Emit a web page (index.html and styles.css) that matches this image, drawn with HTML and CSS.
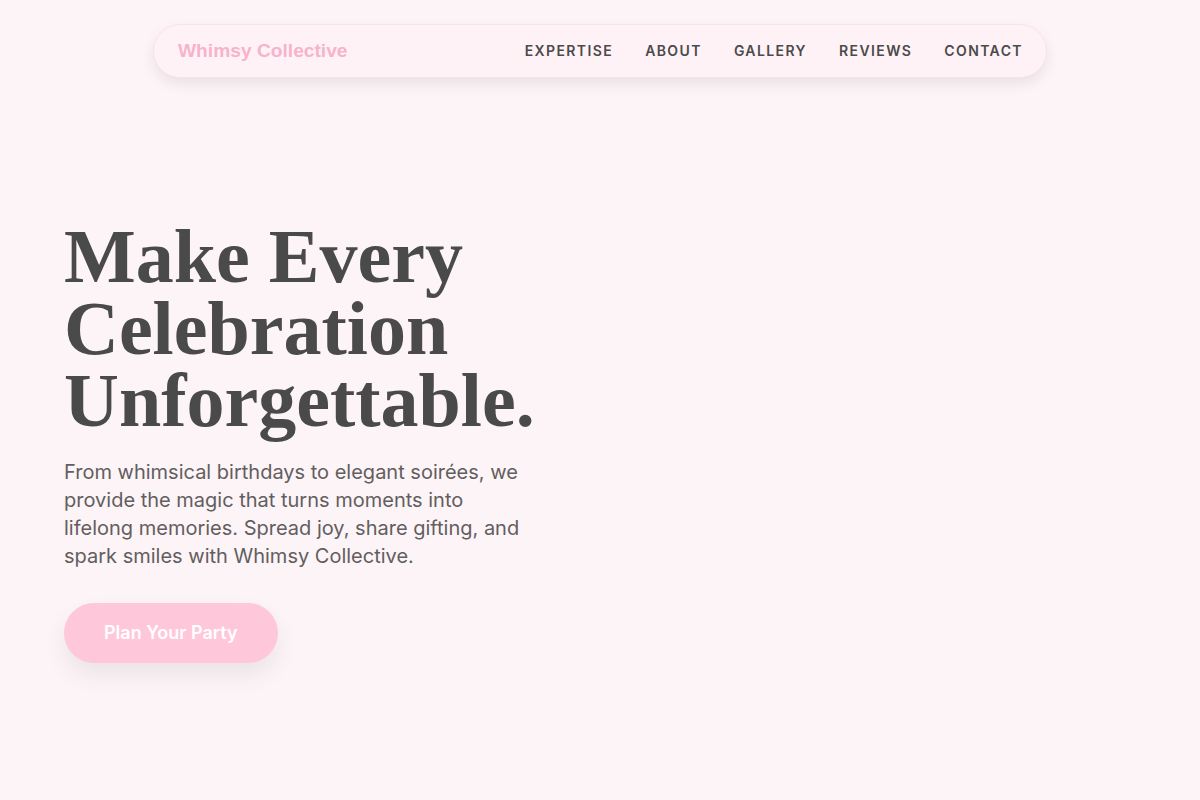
FILE: index.html
```html
<!DOCTYPE html>
<html lang="en">
<head>
<meta charset="UTF-8">
<meta name="viewport" content="width=device-width, initial-scale=1.0">
<title>Whimsy Collective</title>
<link rel="stylesheet" href="styles.css">
</head>
<body>

    <header class="site-header">
        <nav class="navbar">
            <a href="#" class="navbar-logo">Whimsy Collective</a>
            <div class="navbar-links">
                <a href="#expertise">Expertise</a>
                <a href="#about">About</a>
                <a href="#gallery">Gallery</a>
                <a href="#reviews">Reviews</a>
                <a href="#contact">Contact</a>
            </div>
        </nav>
    </header>

    <main class="hero">
        <h1 class="hero-title">Make Every Celebration Unforgettable.</h1>
        <p class="hero-text">From whimsical birthdays to elegant soirées, we provide the magic that turns moments into lifelong memories. Spread joy, share gifting, and spark smiles with Whimsy Collective.</p>
        <a href="#contact" class="hero-button">Plan Your Party</a>
    </main>

</body>
</html>
```

FILE: styles.css
```css
body {
    font-family: Inter, "Noto Sans", sans-serif;
    background-color: #fdf4f7;
    color: #4a4a4a;
    margin: 0;
    padding: 0;
}

.site-header {
    padding-top: 24px;
    display: flex;
    justify-content: center;
}

.navbar {
    width: 894px;
    height: 54px;
    box-sizing: border-box;
    display: flex;
    align-items: center;
    justify-content: space-between;
    padding: 0 23px 1px 24px;
    background-color: #fff2f6;
    border: 1px solid #fbe1e9;
    border-radius: 27px;
    box-shadow: 0 6px 14px rgba(0, 0, 0, 0.08);
}

.navbar-logo {
    font-family: "Liberation Sans", Arial, sans-serif;
    font-weight: bold;
    font-size: 19.2px;
    color: #f7b3cc;
    text-decoration: none;
}

.navbar-links {
    display: flex;
    gap: 32px;
}

.navbar-links a {
    font-size: 14px;
    font-weight: 600;
    letter-spacing: 1.4px;
    text-transform: uppercase;
    color: #4a4a4a;
    text-decoration: none;
}

.hero {
    padding: 142px 64px 120px;
}

.hero-title {
    font-family: "Liberation Serif", "Times New Roman", serif;
    font-weight: bold;
    font-size: 76px;
    line-height: 72px;
    color: #4a4a4a;
    max-width: 520px;
    margin: 0;
}

.hero-text {
    font-size: 20px;
    line-height: 28px;
    color: #625e60;
    max-width: 470px;
    margin: 22px 0 0;
}

.hero-button {
    display: inline-block;
    margin-top: 33px;
    padding: 18px 40px;
    font-size: 18px;
    line-height: 24px;
    font-weight: 600;
    color: #ffffff;
    background-color: #ffc8da;
    border-radius: 30px;
    text-decoration: none;
    box-shadow: 0 12px 24px rgba(0, 0, 0, 0.07);
}
```
